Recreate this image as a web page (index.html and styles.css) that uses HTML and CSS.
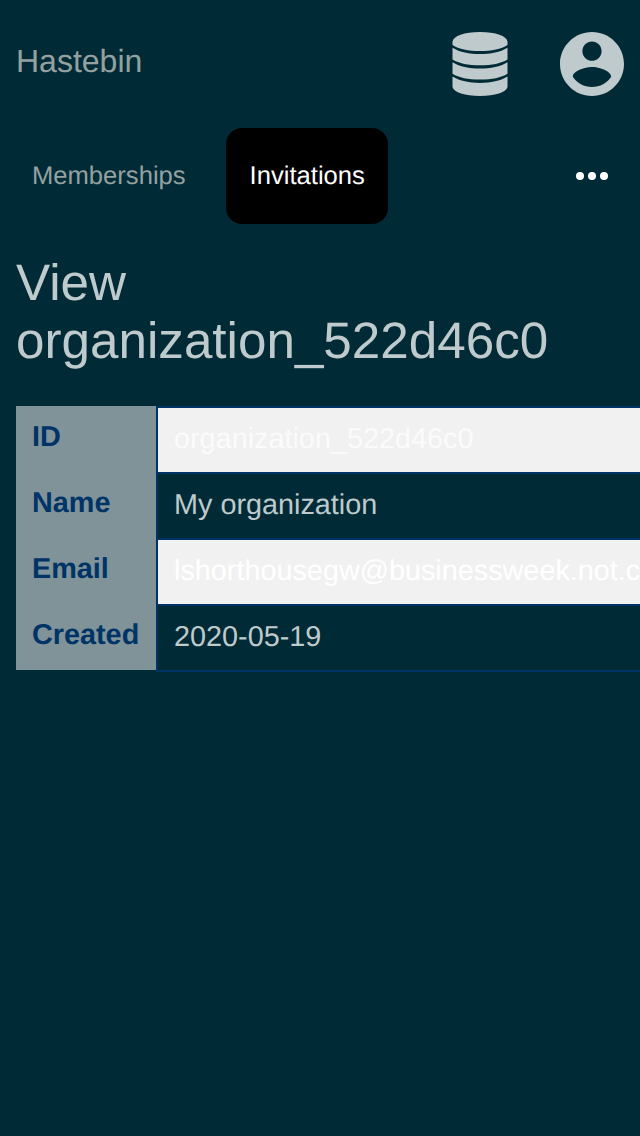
FILE: index.html
```html
<!DOCTYPE html>
<html lang="en">
<head>
<meta charset="utf-8">
<title>View organization</title>
<link rel="stylesheet" href="styles.css">
</head>
<body>
<header class="header">
  <span class="brand">Hastebin</span>
  <div class="actions">
    <svg width="56" height="64" viewBox="0 0 56 64"><path d="M.5 9.600C1.500 4 12 0 28 0s26.500 4 27.500 9.600V13C49 17.200 40 19 28 19S7 17.200 .5 13zM.5 15.700C8 20.200 17 22 28 22s20-1.800 27.500-6.300V27.500C49 31.500 40 33.300 28 33.300S7 31.500 .5 27.500zM.5 30.200C8 34.700 17 36.500 28 36.500S48 34.700 55.500 30.200v11.500C49 45.700 40 47.500 28 47.500S7 45.700 .5 41.700zM.5 44.600C8 49.100 17 50.900 28 50.900s20-1.800 27.500-6.300V55C54 60.500 43 64 28 64S2 60.500 .5 55z"/></svg>
    <svg width="64" height="64" viewBox="2 2 20 20"><path d="M12 2C6.480 2 2 6.480 2 12s4.480 10 10 10 10-4.480 10-10S17.520 2 12 2zm0 3c1.660 0 3 1.340 3 3s-1.340 3-3 3-3-1.340-3-3 1.340-3 3-3zm0 14.200c-2.500 0-4.710-1.280-6-3.220.03-1.990 4-3.080 6-3.080 1.990 0 5.970 1.090 6 3.080-1.290 1.940-3.500 3.220-6 3.220z"/></svg>
  </div>
</header>
<nav class="nav">
  <a class="tab">Memberships</a>
  <a class="tab tab-active">Invitations</a>
  <svg class="more" width="32" height="8" viewBox="0 0 32 8"><circle cx="4" cy="4" r="4"/><circle cx="16" cy="4" r="4"/><circle cx="28" cy="4" r="4"/></svg>
</nav>
<main class="content">
  <h1 class="title">View organization_522d46c0</h1>
  <dl class="details">
    <dt class="label">ID</dt><dd class="value striped">organization_522d46c0</dd>
    <dt class="label">Name</dt><dd class="value">My organization</dd>
    <dt class="label">Email</dt><dd class="value striped email">lshorthousegw@businessweek.not.com</dd>
    <dt class="label">Created</dt><dd class="value last">2020-05-19</dd>
  </dl>
</main>
</body>
</html>
```
FILE: styles.css
```css
* { box-sizing: border-box; }
body {
  margin: 0;
  height: 1136px;
  overflow: hidden;
  background: #002b36;
  color: #bfcacd;
  font-family: "Liberation Sans", Arial, sans-serif;
  text-rendering: geometricPrecision;
}
.header {
  display: flex;
  justify-content: space-between;
  height: 128px;
  padding: 32px 16px;
}
.brand {
  color: #93a1a1;
  font-size: 32px;
  line-height: 36px;
  padding-top: 11px;
}
.actions { display: flex; gap: 52px; fill: #bfcacd; }
.nav {
  display: flex;
  align-items: center;
  height: 96px;
  padding-right: 32px;
}
.tab {
  height: 96px;
  padding: 0 32px;
  color: #93a1a1;
  font-size: 25.6px;
  line-height: 97px;
}
.tab-active {
  width: 162px;
  margin-left: 8.4px;
  padding: 0 0 0 23.6px;
  border-radius: 16px;
  background: #000;
  color: #fff;
}
.more { margin-left: auto; fill: #fff; }
.content { padding: 30px 0 0 16px; overflow: hidden; }
.title {
  margin: 0;
  font-size: 51.2px;
  font-weight: 400;
  line-height: 58px;
}
.details {
  display: grid;
  grid-template-columns: 140px minmax(0, 1fr);
  margin: 36px 0 0;
  padding-bottom: 2px;
  font-size: 28.8px;
}
.label {
  height: 66px;
  padding-left: 16px;
  background: #7f9399;
  color: #036;
  font-weight: 700;
  line-height: 62px;
}
.value {
  height: 66px;
  margin: 0;
  padding-left: 16px;
  border: solid #036;
  border-width: 2px 0 0 2px;
  line-height: 63px;
  white-space: nowrap;
}
.striped { background: #f1f1f1; color: #fbfbfb; }
.email { overflow: hidden; color: #fff; }
.last { height: 68px; border-bottom-width: 2px; margin-bottom: -2px; }
```
